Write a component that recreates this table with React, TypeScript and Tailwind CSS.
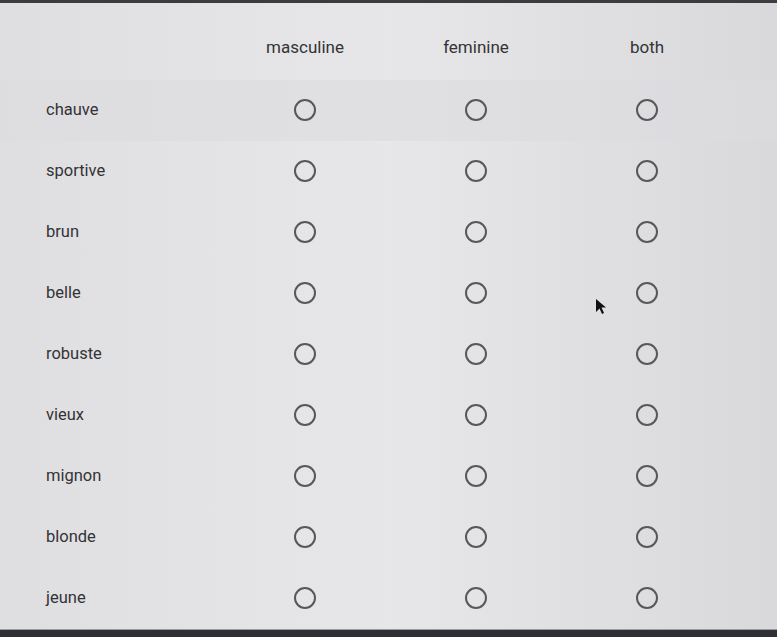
const columns = ["masculine", "feminine", "both"]

const rows = ["chauve", "sportive", "brun", "belle", "robuste", "vieux", "mignon", "blonde", "jeune"]

function Radio() {
  return (
    <span className="block w-[22px] h-[22px] rounded-full border-2 border-[#58585b] bg-transparent" />
  )
}

export default function App() {
  return (
    <main
      className="w-[777px] h-[637px] overflow-hidden flex flex-col bg-gradient-to-r from-[#dfdfe1] via-[#e7e7e9] to-[#d9d9dc] text-[#333335]"
      style={{ fontFamily: "Roboto, 'Liberation Sans', sans-serif" }}
    >
      <div className="h-[3px] bg-[#3b3b40]" />
      <div className="relative flex-1 flex flex-col">
        <div className="grid grid-cols-[220px_170px_172px_170px] h-[77px] items-start pt-[32px] text-[17px]">
          <div />
          {columns.map(c => (
            <div key={c} className="text-center">{c}</div>
          ))}
        </div>

        {rows.map((r, i) => (
          <div
            key={r}
            className={`grid grid-cols-[220px_170px_172px_170px] h-[61px] items-center text-[16.5px] ${
              i === 0 ? "bg-[#dcdcdf]/60" : ""
            }`}
          >
            <div className="pl-[46px]">{r}</div>
            {columns.map(c => (
              <div key={c} className="flex justify-center">
                <Radio />
              </div>
            ))}
          </div>
        ))}

        {/* mouse pointer */}
        <svg
          className="absolute left-[595px] top-[295px]"
          width="12"
          height="18"
          viewBox="0 0 12 18"
        >
          <path d="M1 1 L1 14 L4.5 10.5 L7 16 L9 15 L6.5 9.5 L11 9.5 Z" fill="#111" />
        </svg>
      </div>
      <div className="h-[9px] bg-[#2f3036] border-t border-[#9a9aa0]" />
    </main>
  )
}
